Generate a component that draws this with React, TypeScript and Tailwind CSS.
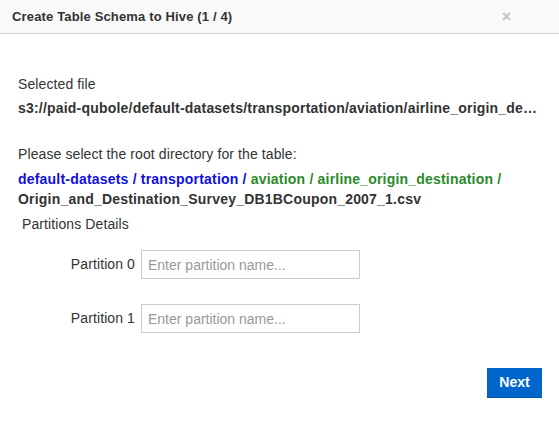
const PartitionRow = ({ index }: { index: number }) => {
  return (
    <div className="flex items-center">
      <label className="w-[123px] pr-[6px] text-right text-[14px] tracking-[0.1px] text-[#333]">Partition {index}</label>
      <input
        type="text"
        placeholder="Enter partition name..."
        className="h-[29px] w-[219px] border border-[#cccccc] px-[6px] text-[14px] text-[#333] placeholder:text-[#999] outline-none"
      />
    </div>
  )
}

export default function App() {
  return (
    <div className="h-[448px] w-[559px] bg-white font-['Liberation_Sans',Arial,sans-serif] text-[#333]">
      {/* Header - Start */}
      <div className="flex h-[34px] items-center justify-between border-b border-[#cfcfcf] bg-[#f9f9f9] pl-[12px] pr-[48px]">
        <h3 className="text-[13px] font-bold tracking-[0.15px] text-[#333]">Create Table Schema to Hive (1 / 4)</h3>
        <span className="text-[16px] font-bold leading-none text-[#c4c4c4]">×</span>
      </div>
      {/* Header - End */}

      {/* Body - Start */}
      <div className="px-[18px] pt-[40px]">
        <div className="text-[14px] leading-[20px] tracking-[0.1px]">Selected file</div>
        <div className="mt-[4px] truncate pr-[1px] text-[14px] font-bold leading-[20px] tracking-[0.2px]">
          s3://paid-qubole/default-datasets/transportation/aviation/airline_origin_destination/Origin_and_Destination_Survey_DB1BCoupon_2007_1.csv
        </div>

        <div className="mt-[26px] text-[14px] leading-[20px] tracking-[0.1px]">Please select the root directory for the table:</div>
        <div className="mt-[5px] text-[14px] font-bold leading-[20px] tracking-[0.2px]">
          <span className="text-[#1010dd]">default-datasets / transportation / </span>
          <span className="text-[#2a8a2a]">aviation / airline_origin_destination / </span>
          <br />
          <span>Origin_and_Destination_Survey_DB1BCoupon_2007_1.csv</span>
        </div>

        <div className="mt-[5px] pl-[4px] text-[14px] leading-[20px] tracking-[0.1px]">Partitions Details</div>

        <div className="mt-[16px] flex flex-col gap-[25px]">
          <PartitionRow index={0} />
          <PartitionRow index={1} />
        </div>

        <div className="-mr-[1px] mt-[35px] flex justify-end">
          <button className="h-[30px] w-[55px] border-b border-[#0a54a8] bg-[#0066cc] text-[14px] font-bold text-white">
            Next
          </button>
        </div>
      </div>
      {/* Body - End */}
    </div>
  )
}
